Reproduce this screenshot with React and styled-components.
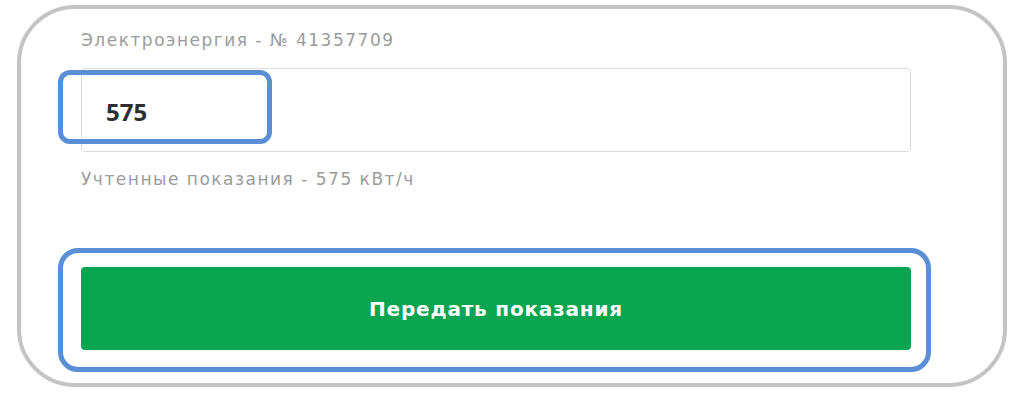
import styled, { createGlobalStyle } from 'styled-components';

const GlobalStyle = createGlobalStyle`
  html, body {
    margin: 0;
    padding: 0;
    background: #ffffff;
  }
  body {
    font-family: 'DejaVu Sans', 'Noto Sans', sans-serif;
  }
`;

const colors = {
  frame: '#c4c4c4',
  label: '#9b9b9b',
  value: '#2f2f2f',
  field: '#dddddd',
  green: '#09a550',
  mark: '#5a8fd6',
};

const Page = styled.div`
  width: 1024px;
  height: 404px;
  padding: 5px 0 0 17px;
  box-sizing: border-box;
`;

const Frame = styled.div`
  width: 990px;
  height: 382px;
  box-sizing: border-box;
  border: 4px solid ${colors.frame};
  border-radius: 58px;
  padding: 19px 92px 0 60px;
  display: flex;
  flex-direction: column;
`;

const Label = styled.div`
  font-size: 17px;
  line-height: 24px;
  letter-spacing: 1.5px;
  color: ${colors.label};
`;

const Field = styled.div`
  position: relative;
  margin-top: 16px;
  height: 84px;
  box-sizing: border-box;
  border: 1px solid ${colors.field};
  border-radius: 4px;
  display: flex;
  align-items: center;
  padding-left: 24px;
`;

const Value = styled.span`
  font-family: 'Open Sans', 'Noto Sans', sans-serif;
  font-size: 24px;
  font-weight: 700;
  color: ${colors.value};
  padding-top: 2px;
`;

const Highlight = styled.div`
  position: absolute;
  left: -24px;
  top: 1px;
  width: 214px;
  height: 74px;
  box-sizing: border-box;
  border: 5px solid ${colors.mark};
  border-radius: 12px;
`;

const Hint = styled.div`
  margin-top: 15px;
  font-size: 17px;
  line-height: 24px;
  letter-spacing: 1.5px;
  color: ${colors.label};
`;

const ButtonMark = styled.div`
  margin: 57px 0 0 -23px;
  width: 873px;
  box-sizing: border-box;
  border: 5px solid ${colors.mark};
  border-radius: 20px;
  padding: 14px 15px 17px 18px;
`;

const SubmitButton = styled.button`
  width: 100%;
  height: 83px;
  border: none;
  border-radius: 4px;
  background: ${colors.green};
  color: #ffffff;
  font-family: 'DejaVu Sans', 'Noto Sans', sans-serif;
  font-size: 20px;
  font-weight: 700;
  letter-spacing: 0.8px;
  cursor: pointer;
`;

function App() {
  return (
    <Page>
      <GlobalStyle />
      <Frame>
        <Label>Электроэнергия - № 41357709</Label>
        <Field>
          <Value>575</Value>
          <Highlight />
        </Field>
        <Hint>Учтенные показания - 575 кВт/ч</Hint>
        <ButtonMark>
          <SubmitButton>Передать показания</SubmitButton>
        </ButtonMark>
      </Frame>
    </Page>
  );
}

export default App;
